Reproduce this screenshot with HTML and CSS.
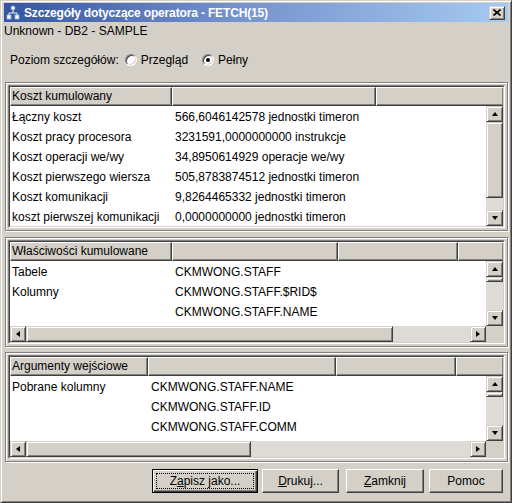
FILE: index.html
```html
<!DOCTYPE html>
<html lang="pl">
<head>
<meta charset="utf-8">
<title>Szczegóły dotyczące operatora</title>
<link rel="stylesheet" href="styles.css">
</head>
<body>
<div class="window">
  <div class="titlebar">
    <svg class="ticon" viewBox="0 0 16 16" width="16" height="16">
      <path d="M8 5 V8 M4 10 V8 H12 V10" stroke="#e8f0ff" stroke-width="1" fill="none"/>
      <circle cx="8" cy="3" r="2" fill="#ffffff" stroke="#9ab4e0" stroke-width="0.8"/>
      <rect x="2" y="10" width="4" height="4" fill="#ffffff" stroke="#9ab4e0" stroke-width="0.8"/>
      <rect x="10" y="10" width="4" height="4" fill="#ffffff" stroke="#9ab4e0" stroke-width="0.8"/>
    </svg>
    <span class="title">Szczegóły dotyczące operatora - FETCH(15)</span>
    <div class="close bev">
      <svg viewBox="0 0 8 7" width="8" height="7"><path d="M0.5 0.5 L7.5 6.5 M7.5 0.5 L0.5 6.5" stroke="#000" stroke-width="1.6"/></svg>
    </div>
  </div>

  <div class="info">Unknown - DB2 - SAMPLE</div>

  <div class="level">
    <span>Poziom szczegółów:</span>
    <span class="radio first"></span><span class="rlabel">Przegląd</span>
    <span class="radio second checked"></span><span class="rlabel">Pełny</span>
  </div>

  <div class="panel p1">
    <div class="pane">
      <div class="grid">
        <div class="header">
          <div class="hcell">Koszt kumulowany</div>
          <div class="hcell"></div>
          <div class="hcell fill"></div>
        </div>
        <div class="tbody">
          <div class="row"><span class="cell">Łączny koszt</span><span class="cell">566,6046142578 jednostki timeron</span></div>
          <div class="row"><span class="cell">Koszt pracy procesora</span><span class="cell">3231591,0000000000 instrukcje</span></div>
          <div class="row"><span class="cell">Koszt operacji we/wy</span><span class="cell">34,8950614929 operacje we/wy</span></div>
          <div class="row"><span class="cell">Koszt pierwszego wiersza</span><span class="cell">505,8783874512 jednostki timeron</span></div>
          <div class="row"><span class="cell">Koszt komunikacji</span><span class="cell">9,8264465332 jednostki timeron</span></div>
          <div class="row"><span class="cell">koszt pierwszej komunikacji</span><span class="cell">0,0000000000 jednostki timeron</span></div>
        </div>
        <div class="vscroll">
          <div class="sbtn bev"><i class="tri up"></i></div>
          <div class="thumb bev"></div>
          <div class="track"></div>
          <div class="sbtn bev"><i class="tri down"></i></div>
        </div>
      </div>
    </div>
  </div>

  <div class="panel p2">
    <div class="pane">
      <div class="grid">
        <div class="header">
          <div class="hcell">Właściwości kumulowane</div>
          <div class="hcell"></div>
          <div class="hcell"></div>
          <div class="hcell fill"></div>
        </div>
        <div class="tbody">
          <div class="row"><span class="cell">Tabele</span><span class="cell">CKMWONG.STAFF</span></div>
          <div class="row"><span class="cell">Kolumny</span><span class="cell">CKMWONG.STAFF.$RID$</span></div>
          <div class="row"><span class="cell"></span><span class="cell">CKMWONG.STAFF.NAME</span></div>
        </div>
        <div class="vscroll">
          <div class="sbtn bev"><i class="tri up"></i></div>
          <div class="thumb bev"></div>
          <div class="track"></div>
          <div class="sbtn bev"><i class="tri down"></i></div>
        </div>
        <div class="hscroll">
          <div class="hbtn bev"><i class="tri left"></i></div>
          <div class="hthumb bev"></div>
          <div class="track"></div>
          <div class="hbtn bev"><i class="tri right"></i></div>
        </div>
        <div class="corner"></div>
      </div>
    </div>
  </div>

  <div class="panel p3">
    <div class="pane">
      <div class="grid">
        <div class="header">
          <div class="hcell">Argumenty wejściowe</div>
          <div class="hcell"></div>
          <div class="hcell"></div>
          <div class="hcell fill"></div>
        </div>
        <div class="tbody">
          <div class="row"><span class="cell">Pobrane kolumny</span><span class="cell">CKMWONG.STAFF.NAME</span></div>
          <div class="row"><span class="cell"></span><span class="cell">CKMWONG.STAFF.ID</span></div>
          <div class="row"><span class="cell"></span><span class="cell">CKMWONG.STAFF.COMM</span></div>
        </div>
        <div class="vscroll">
          <div class="sbtn bev"><i class="tri up"></i></div>
          <div class="thumb bev"></div>
          <div class="track"></div>
          <div class="sbtn bev"><i class="tri down"></i></div>
        </div>
        <div class="hscroll">
          <div class="hbtn bev"><i class="tri left"></i></div>
          <div class="hthumb bev"></div>
          <div class="track"></div>
          <div class="hbtn bev"><i class="tri right"></i></div>
        </div>
        <div class="corner"></div>
      </div>
    </div>
  </div>

  <div class="buttons">
    <div class="btn default"><span>Z<u>a</u>pisz jako...</span></div>
    <div class="btn b-print"><span><u>D</u>rukuj...</span></div>
    <div class="btn b-close"><span><u>Z</u>amknij</span></div>
    <div class="btn b-help"><span>Pomoc</span></div>
  </div>
</div>
</body>
</html>
```
FILE: styles.css
```css
* { box-sizing: border-box; margin: 0; padding: 0; }
html, body { width: 512px; height: 503px; overflow: hidden; }
body {
  background: #d4d0c8;
  font-family: "Liberation Sans", Arial, sans-serif;
  font-size: 12px;
  color: #000;
}
.window {
  width: 512px;
  height: 503px;
  border: 1px solid;
  border-color: #d4d0c8 #404040 #404040 #d4d0c8;
  box-shadow: inset 1px 1px #fff, inset -1px -1px #808080;
  padding: 2px 3px 0 3px;
  display: flex;
  flex-direction: column;
}
.bev {
  background: #d4d0c8;
  border: 1px solid;
  border-color: #d4d0c8 #404040 #404040 #d4d0c8;
  box-shadow: inset 1px 1px #fff, inset -1px -1px #808080;
}

/* title bar */
.titlebar {
  height: 19px;
  flex: none;
  background: linear-gradient(to right, #3655a0 0%, #7391cc 45%, #a6caf0 100%);
  display: flex;
  align-items: center;
  color: #fff;
  font-weight: bold;
  font-size: 12px;
  padding-left: 1px;
}
.ticon { flex: none; }
.title { margin-left: 3px; flex: 1; white-space: nowrap; letter-spacing: -0.15px; }
.close {
  width: 16px;
  height: 14px;
  margin-right: 3px;
  display: flex;
  align-items: center;
  justify-content: center;
  flex: none;
}

/* info + level */
.info { height: 18px; line-height: 18px; flex: none; }
.level {
  margin-top: 10px;
  height: 20px;
  display: flex;
  align-items: center;
  padding-left: 6px;
  flex: none;
}
.radio {
  width: 12px;
  height: 12px;
  border-radius: 50%;
  background: #fff;
  border: 1px solid;
  border-color: #808080 #fff #fff #808080;
  box-shadow: inset 1px 1px #404040, inset -1px -1px #d4d0c8;
  position: relative;
  flex: none;
}
.radio.first { margin-left: 6px; }
.radio.second { margin-left: 14px; }
.radio.checked::after {
  content: "";
  position: absolute;
  left: 3px;
  top: 3px;
  width: 4px;
  height: 4px;
  border-radius: 50%;
  background: #000;
}
.rlabel { margin-left: 4px; }

/* panels */
.panel {
  margin-left: 1px;
  width: 503px;
  border: 1px solid #808080;
  box-shadow: inset 1px 1px #fff, 1px 1px #fff;
  padding: 2px;
  flex: none;
}
.p1 { margin-top: 12px; --cols: 162px 204px 1fr; --rows: 19px 120px; --thumb: 76px; }
.p2 { margin-top: 6px; --cols: 162px 166px 120px 1fr; --rows: 19px 65px 16px; --thumb: 5px; --hthumb: 367px; }
.p3 { margin-top: 5px; --cols: 138px 188px 120px 1fr; --rows: 19px 65px 16px; --thumb: 5px; --hthumb: 225px; }

.pane {
  border: 1px solid;
  border-color: #808080 #fff #fff #808080;
}
.grid {
  border: 1px solid;
  border-color: #404040 #d4d0c8 #d4d0c8 #404040;
  display: grid;
  grid-template-columns: 1fr 17px;
  grid-template-rows: var(--rows);
}
.header {
  grid-column: 1 / -1;
  display: grid;
  grid-template-columns: var(--cols);
  background: #d4d0c8;
}
.hcell {
  border-top: 1px solid #fff;
  border-left: 1px solid #fff;
  border-right: 1px solid #404040;
  border-bottom: 1px solid #404040;
  box-shadow: inset -1px -1px #808080;
  padding-left: 1px;
  line-height: 16px;
  white-space: nowrap;
  overflow: hidden;
}
.hcell.fill { border-right: none; }

.tbody { background: #fff; overflow: hidden; }
.row {
  display: grid;
  grid-template-columns: var(--cols);
  height: 20px;
  line-height: 22px;
}
.cell { padding-left: 2px; white-space: nowrap; overflow: hidden; }
.cell + .cell { padding-left: 3px; }

/* scrollbars */
.vscroll { display: flex; flex-direction: column; background: #dedbd6; }
.sbtn {
  height: 16px;
  flex: none;
  display: flex;
  align-items: center;
  justify-content: center;
}
.thumb { height: var(--thumb); flex: none; }
.track { flex: 1; background: #dedbd6; }
.hscroll { display: flex; background: #dedbd6; }
.hbtn {
  width: 16px;
  flex: none;
  display: flex;
  align-items: center;
  justify-content: center;
}
.hthumb { width: var(--hthumb); flex: none; }
.corner { background: #d4d0c8; }

.tri { display: block; width: 1px; height: 1px; border: 0 solid transparent; }
.tri.up { height: 0; border-width: 0 3px 4px 3px; border-bottom-color: #000; }
.tri.down { height: 0; border-width: 4px 3px 0 3px; border-top-color: #000; }
.tri.left { width: 0; border-width: 3px 4px 3px 0; border-right-color: #000; }
.tri.right { width: 0; border-width: 3px 0 3px 4px; border-left-color: #000; }

/* buttons */
.buttons {
  margin-top: 7px;
  display: flex;
  justify-content: flex-end;
  padding-right: 5px;
  flex: none;
}
.btn {
  height: 24px;
  background: #d4d0c8;
  border: 1px solid;
  border-color: #fff #404040 #404040 #fff;
  box-shadow: inset -1px -1px #808080;
  display: flex;
  align-items: center;
  justify-content: center;
  position: relative;
}
.btn.default {
  width: 106px;
  border: 1px solid #000;
  box-shadow: inset 1px 1px #fff, inset -1px -1px #404040, inset -2px -2px #808080;
}
.btn.default::after {
  content: "";
  position: absolute;
  left: 3px; top: 3px; right: 3px; bottom: 3px;
  border: 1px dotted #000;
}
.b-print { width: 77px; margin-left: 4px; }
.b-close { width: 78px; margin-left: 7px; }
.b-help { width: 74px; margin-left: 5px; }
```
